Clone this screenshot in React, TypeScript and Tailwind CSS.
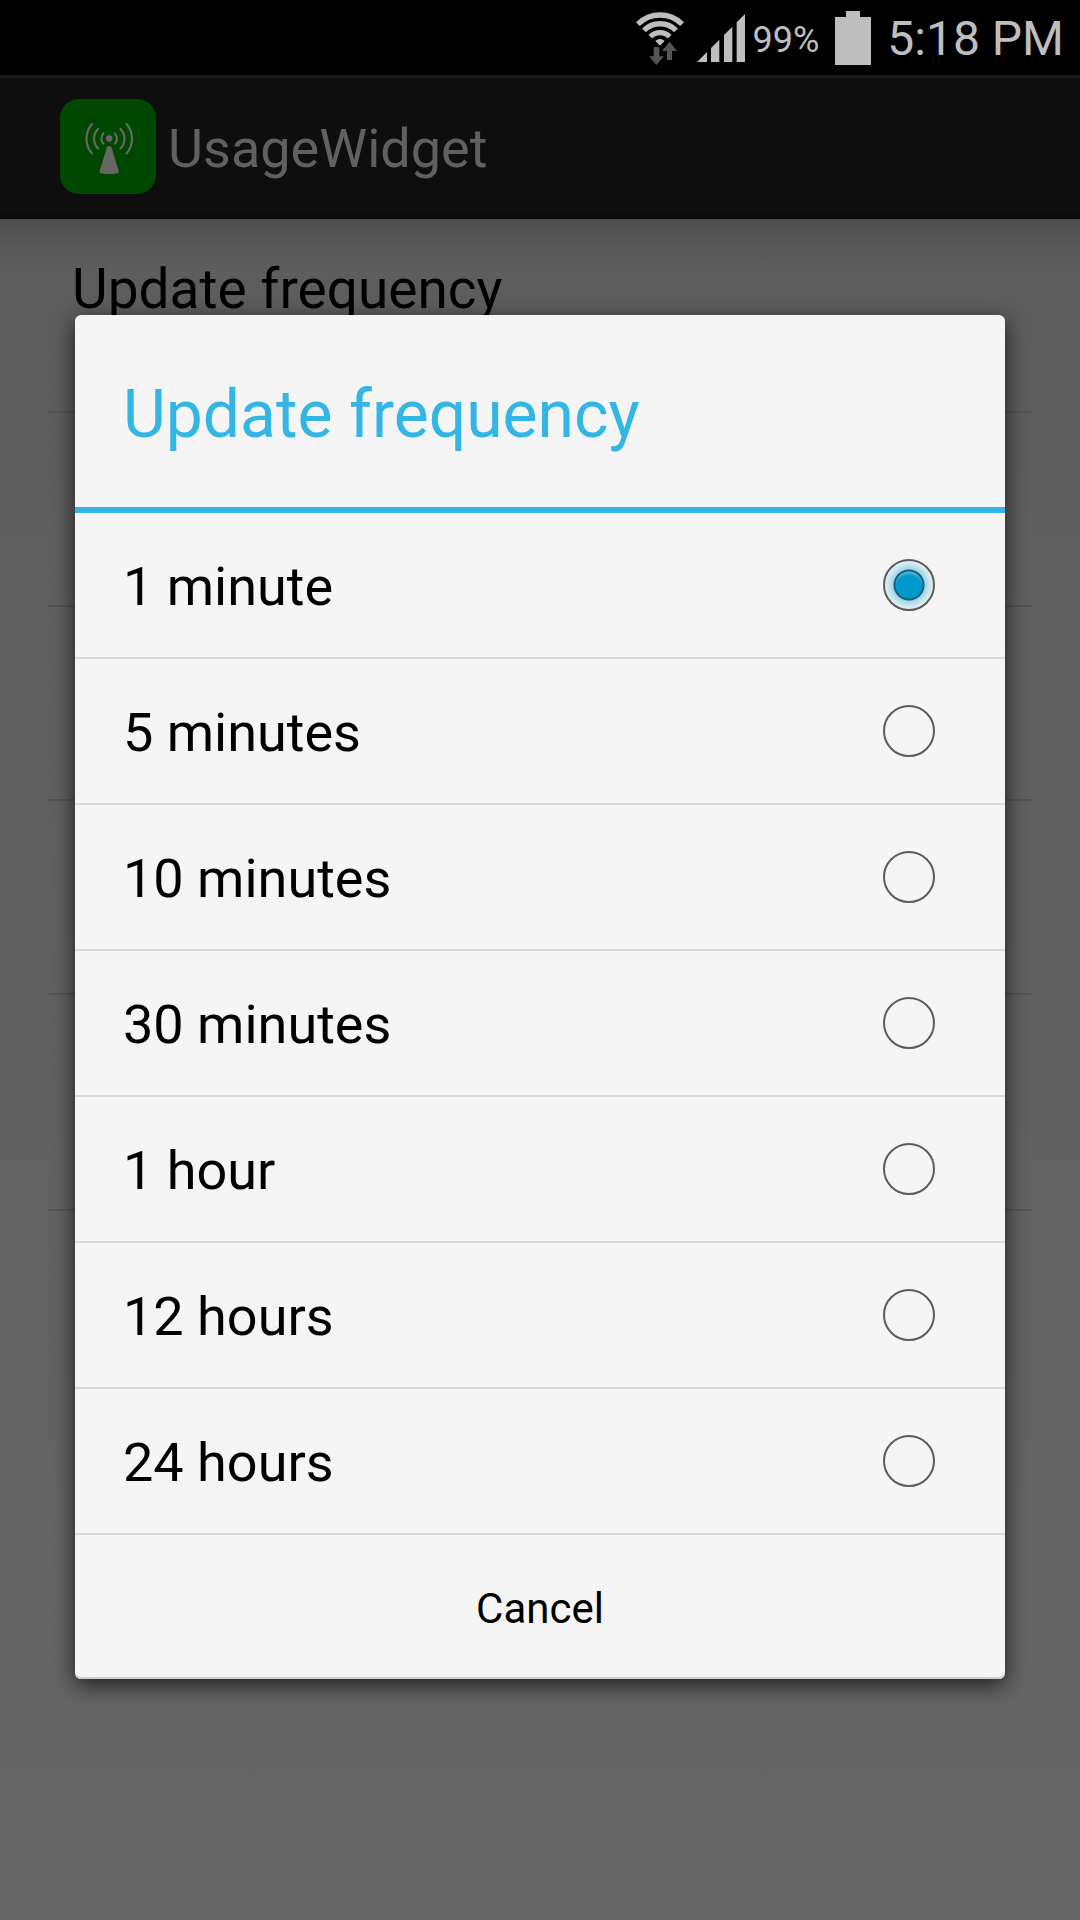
import { useState } from 'react';

const options = ['1 minute', '5 minutes', '10 minutes', '30 minutes', '1 hour', '12 hours', '24 hours'];

function WifiIcon() {
  return (
    <svg viewBox="45 30 150 162" className="h-[54px] w-[50px]" aria-hidden="true">
      <g fill="none" stroke="#bebebe" strokeWidth="16">
        <path d="M53.5 69.5A94 94 0 0 1 186.5 69.5" />
        <path d="M72 88A68 68 0 0 1 168 88" />
        <path d="M91 107A41 41 0 0 1 149 107" />
      </g>
      <path d="M120 134L106 120A20 20 0 0 1 134 120Z" fill="#bebebe" />
      <path d="M101 138h17v28h14L109 192L87 166h14Z" fill="#555555" />
      <path d="M149 122L171 150H156V177H141V150H126Z" fill="#555555" />
    </svg>
  );
}

function SignalIcon() {
  return (
    <svg viewBox="228 42 144 144" className="size-12" fill="#bebebe" aria-hidden="true">
      <path d="M228 186L258 156V186Z" />
      <path d="M270 144L295 119V186H270Z" />
      <path d="M309 105L334 80V186H309Z" />
      <path d="M347 67L372 42V186H347Z" />
    </svg>
  );
}

function BatteryIcon() {
  return (
    <svg viewBox="0 0 36 54" className="h-[54px] w-9" fill="#bebebe" aria-hidden="true">
      <path d="M11 0H25V6H36V54H0V6H11Z" />
    </svg>
  );
}

function AppIcon() {
  return (
    <svg viewBox="0 0 96 96" className="size-24" aria-hidden="true">
      <rect width="96" height="95" rx="19" fill="#004800" />
      <g fill="none" stroke="#666666" strokeWidth="2.2" strokeLinecap="round">
        <path d="M32 25A22.5 22.5 0 0 0 32 54.5" />
        <path d="M38 30A14 14 0 0 0 38 49.5" />
        <path d="M43.3 34.5A7.5 7.5 0 0 0 43.3 44.5" />
        <path d="M66.5 25A22.5 22.5 0 0 1 66.5 54.5" />
        <path d="M60.5 30A14 14 0 0 1 60.5 49.5" />
        <path d="M55 34.5A7.5 7.5 0 0 1 55 44.5" />
      </g>
      <circle cx="49.2" cy="39.5" r="3.2" fill="#666666" />
      <path d="M47 48Q49.2 46 51.5 48L59 73Q58 75 49 75T39.3 73Z" fill="#666666" />
    </svg>
  );
}

function StatusBar() {
  return (
    <div className="flex h-[75px] items-center justify-end bg-black pr-4 text-[#bebebe]">
      <WifiIcon />
      <span className="ml-3">
        <SignalIcon />
      </span>
      <span className="ml-2 pt-1 text-4xl">99%</span>
      <span className="ml-4">
        <BatteryIcon />
      </span>
      <span className="ml-4 pt-0.5 text-5xl">5:18 PM</span>
    </div>
  );
}

export default function App() {
  const [selected, setSelected] = useState('1 minute');
  const [open, setOpen] = useState(true);

  return (
    <div className="relative flex min-h-screen flex-col bg-[#666666] font-['Roboto',sans-serif]">
      <StatusBar />

      <header className="flex h-36 items-center gap-3 border-t-3 border-b-6 border-t-[#191919] border-b-[#0a0a0a] bg-[#0e0e0e] px-15 pt-0.5">
        <AppIcon />
        <h1 className="pt-1 text-[54px] leading-16 text-[#606060]">UsageWidget</h1>
      </header>

      <main className="flex-1 bg-linear-to-b from-[#5d5d5d] to-[#666666]">
        <div className="bg-linear-to-b from-black/15 to-transparent to-5% px-12">
          {/* preference rows */}
          <div className="h-[194px] border-b-2 border-[#535353] px-6 pt-[38px]">
            <h2 className="text-[55px] leading-16 text-black">Update frequency</h2>
          </div>
          <div className="h-[194px] border-b-2 border-[#535353]" />
          <div className="h-[194px] border-b-2 border-[#535353]" />
          <div className="h-[194px] border-b-2 border-[#565656]" />
          <div className="h-[216px] border-b-2 border-[#565656]" />
        </div>
      </main>

      {open && (
        <div className="absolute inset-x-0 top-[75px] bottom-0 flex items-center px-[75px] pb-0.5">
          <div
            role="dialog"
            aria-labelledby="dialog-title"
            className="w-full rounded-md bg-[#f5f5f5] text-black shadow-[0_6px_22px_rgba(0,0,0,0.7),inset_0_-2px_0_#d0d0d0]"
          >
            <h2
              id="dialog-title"
              className="flex h-[198px] items-center border-b-6 border-[#33b5e5] px-12 pt-2 text-[66px] text-[#33b5e5]"
            >
              Update frequency
            </h2>

            {options.map((option) => (
              <label
                key={option}
                className="flex h-[146px] items-center justify-between border-b-2 border-[#dadada] pr-[70px] pl-12 text-[54px]"
              >
                <span className="pt-1">{option}</span>
                <input
                  type="radio"
                  name="frequency"
                  checked={selected === option}
                  onChange={() => setSelected(option)}
                  className="size-[52px] appearance-none rounded-full border-2 border-[#5c5c5c] checked:bg-[radial-gradient(circle,transparent_13px,#1c5f78_14px,#1c5f78_15px,#9fd6ea_16px,#f0f4f5_25px),radial-gradient(circle_at_50%_58%,#0099cc_13px,#7ccbe6_19px)]"
                />
              </label>
            ))}

            <button type="button" onClick={() => setOpen(false)} className="h-36 w-full pt-1 text-[42px]">
              Cancel
            </button>
          </div>
        </div>
      )}
    </div>
  );
}
